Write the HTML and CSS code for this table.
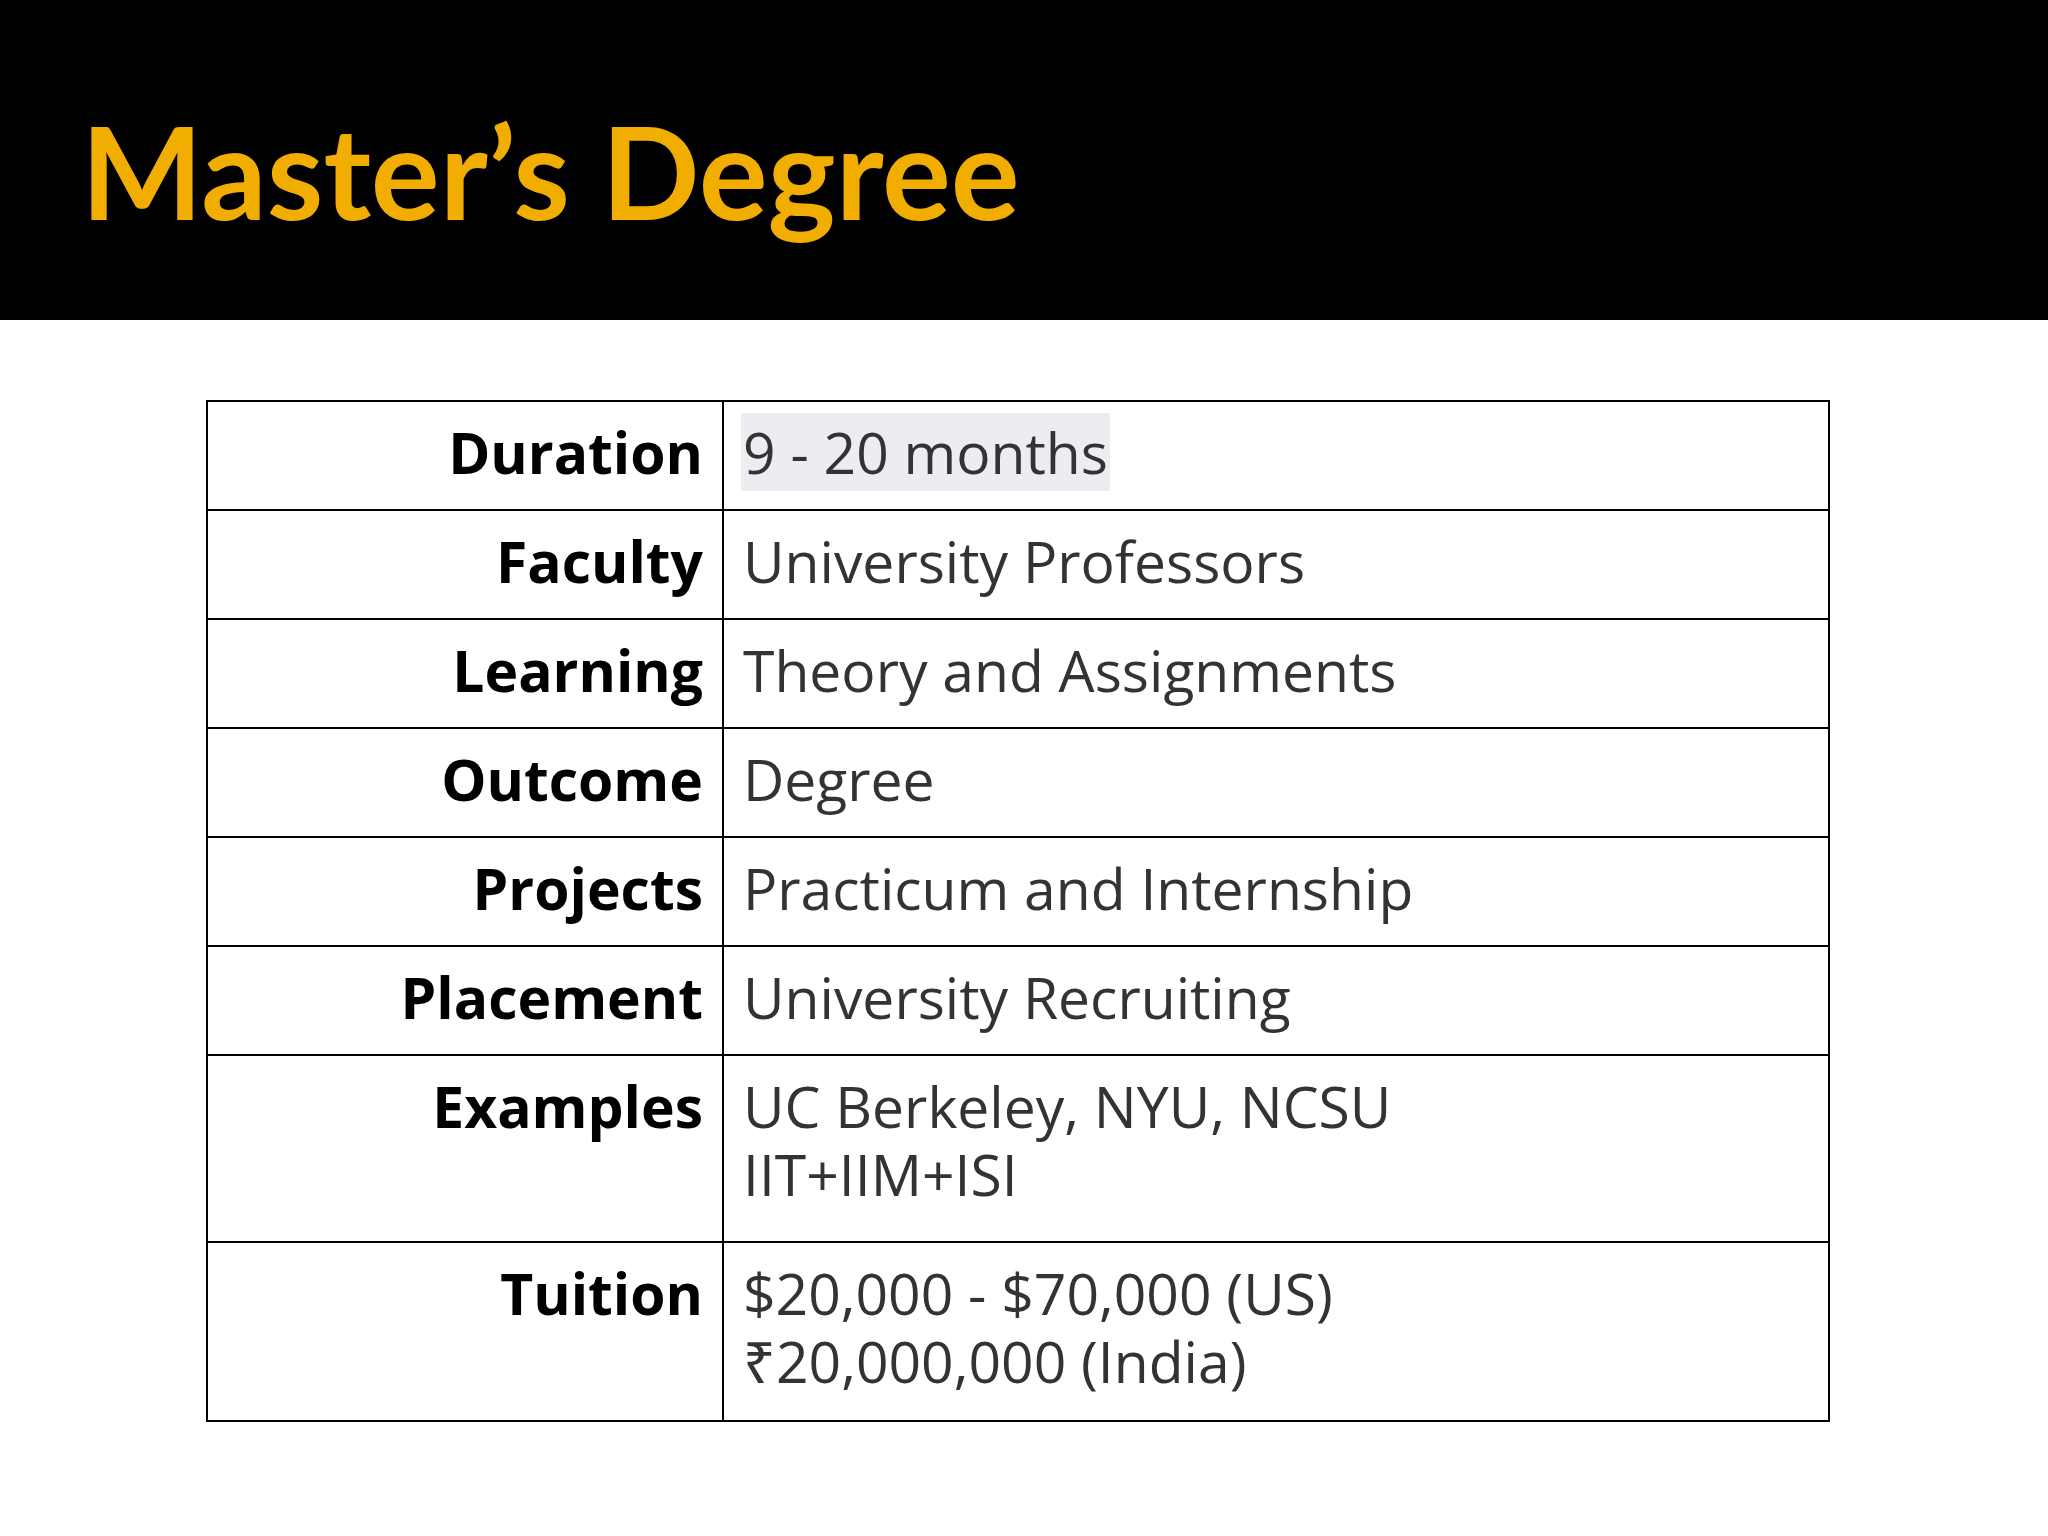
FILE: index.html
```html
<!DOCTYPE html>
<html>
<head>
<meta charset="utf-8">
<link rel="stylesheet" href="styles.css">
</head>
<body>
<header class="header">
  <h1 class="title">Master’s Degree</h1>
</header>
<main class="content">
  <table class="info">
    <tr class="row">
      <th class="label">Duration</th>
      <td class="value"><span class="hl">9 - 20 months</span></td>
    </tr>
    <tr class="row">
      <th class="label">Faculty</th>
      <td class="value">University Professors</td>
    </tr>
    <tr class="row">
      <th class="label">Learning</th>
      <td class="value">Theory and Assignments</td>
    </tr>
    <tr class="row">
      <th class="label">Outcome</th>
      <td class="value">Degree</td>
    </tr>
    <tr class="row">
      <th class="label">Projects</th>
      <td class="value">Practicum and Internship</td>
    </tr>
    <tr class="row">
      <th class="label">Placement</th>
      <td class="value">University Recruiting</td>
    </tr>
    <tr class="row row-examples">
      <th class="label">Examples</th>
      <td class="value">UC Berkeley, NYU, NCSU<br>IIT+IIM+ISI</td>
    </tr>
    <tr class="row row-tuition">
      <th class="label">Tuition</th>
      <td class="value">$20,000 - $70,000 (US)<br>₹20,000,000 (India)</td>
    </tr>
  </table>
</main>
</body>
</html>
```

FILE: styles.css
```css
html, body {
  margin: 0;
  padding: 0;
  background: #ffffff;
}

.header {
  height: 320px;
  background: #000000;
  padding-left: 81px;
  box-sizing: border-box;
}

.title {
  margin: 0;
  padding-top: 90px;
  font-family: "Lato", "Liberation Sans", sans-serif;
  font-weight: 700;
  font-size: 129px;
  line-height: 160px;
  color: #f1ad00;
}

.content {
  padding: 80px 0 0 206px;
}

.info {
  border-collapse: collapse;
  width: 1624px;
  border: 2px solid #000;
}

.row > th, .row > td {
  border: 2px solid #000;
  vertical-align: top;
  padding-top: 16px;
  padding-bottom: 23px;
  line-height: 68px;
  font-family: "Open Sans", "Liberation Sans", sans-serif;
  font-size: 57px;
}

.label {
  width: 516px;
  box-sizing: border-box;
  text-align: right;
  font-weight: 700;
  color: #000;
  padding-right: 19px;
  padding-left: 10px;
}

.value {
  text-align: left;
  font-weight: 400;
  color: #333333;
  padding-left: 19px;
}

.row-examples > th, .row-examples > td {
  padding-bottom: 33px;
}

.row-tuition > th, .row-tuition > td {
  padding-bottom: 25px;
}

.hl {
  background: #eeecf0;
  margin-left: -2px;
  padding: 0 2px;
}
```
